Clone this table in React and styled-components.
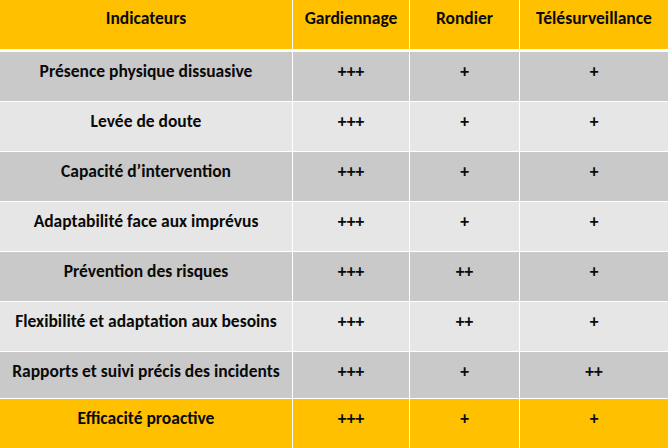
import React from "react";
import styled, { createGlobalStyle } from "styled-components";

const Global = createGlobalStyle`
  body {
    margin: 0;
    background: #ffffff;
    font-family: Carlito, "Liberation Sans", Arial, sans-serif;
  }
`;

const Table = styled.div`
  width: 668px;
  height: 448px;
  display: flex;
  flex-direction: column;
  gap: 1px;
  background: #ffffff;
`;

const Row = styled.div`
  display: grid;
  grid-template-columns: 292px 116px 109px 1fr;
  column-gap: 1px;
  height: ${props => props.h}px;
  margin-bottom: ${props => (props.header ? 2 : 0)}px;
`;

const bg = {
  yellow: "#ffc000",
  dark: "#c9c9c9",
  light: "#e6e6e6",
};

const Cell = styled.div`
  background: ${props => bg[props.tone]};
  color: #0a0a0a;
  font-weight: bold;
  font-size: 17.5px;
  text-align: center;
  padding-top: ${props => (props.header ? 8 : 9)}px;
  line-height: 21px;
  white-space: nowrap;
`;

const header = ["Indicateurs", "Gardiennage", "Rondier", "Télésurveillance"];

const rows = [
  ["Présence physique dissuasive", "+++", "+", "+"],
  ["Levée de doute", "+++", "+", "+"],
  ["Capacité d’intervention", "+++", "+", "+"],
  ["Adaptabilité face aux imprévus", "+++", "+", "+"],
  ["Prévention des risques", "+++", "++", "+"],
  ["Flexibilité et adaptation aux besoins", "+++", "++", "+"],
  ["Rapports et suivi précis des incidents", "+++", "+", "++"],
  ["Efficacité proactive", "+++", "+", "+"],
];

const heights = [49, 49, 49, 49, 49, 49, 46, 49];

export default function App() {
  return (
    <>
      <Global />
      <Table>
        <Row h={49} header>
          {header.map(h => (
            <Cell key={h} tone="yellow" header>{h}</Cell>
          ))}
        </Row>
        {rows.map((r, i) => {
          const tone = i === rows.length - 1 ? "yellow" : i % 2 === 0 ? "dark" : "light";
          return (
            <Row key={r[0]} h={heights[i]}>
              {r.map((c, j) => (
                <Cell key={j} tone={tone}>{c}</Cell>
              ))}
            </Row>
          );
        })}
      </Table>
    </>
  );
}
